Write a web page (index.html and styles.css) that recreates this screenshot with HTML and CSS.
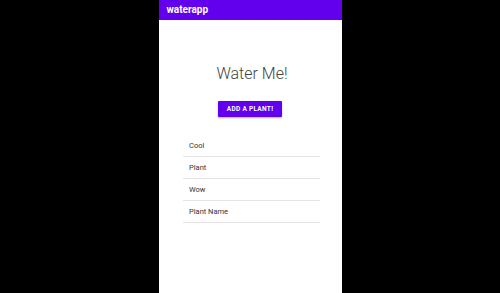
FILE: index.html
```html
<!DOCTYPE html>
<html lang="en">
<head>
    <meta charset="UTF-8">
    <meta name="viewport" content="width=device-width, initial-scale=1.0">
    <title>waterapp</title>
    <link rel="stylesheet" href="styles.css">
</head>
<body>
    <div class="screen">
        <div class="app-bar">waterapp</div>

        <div class="content">
            <h1 class="title">Water Me!</h1>
            <button class="add-btn">Add a plant!</button>

            <ul class="plant-list">
                <li>Cool</li>
                <li>Plant</li>
                <li>Wow</li>
                <li>Plant Name</li>
            </ul>
        </div>
    </div>
</body>
</html>
```

FILE: styles.css
```css
body {
    margin: 0;
    background: #000;
    font-family: Roboto, "Noto Sans", sans-serif;
    display: flex;
    justify-content: center;
    height: 293px;
    overflow: hidden;
}
.screen {
    width: 183px;
    height: 293px;
    background: white;
}
.app-bar {
    height: 20px;
    background: #6200ee;
    color: white;
    font-size: 10px;
    font-weight: 700;
    line-height: 20px;
    padding-left: 8px;
}
.content {
    display: flex;
    flex-direction: column;
    align-items: center;
}
.title {
    margin: 44px 0 0 4px;
    font-size: 16px;
    font-weight: 300;
    color: #444;
    line-height: 20px;
}
.add-btn {
    margin-top: 17px;
    width: 64px;
    height: 16px;
    padding: 0;
    background: #6200ee;
    color: white;
    border: none;
    border-radius: 1px;
    font-family: Roboto, sans-serif;
    font-size: 6.5px;
    font-weight: 700;
    text-transform: uppercase;
    letter-spacing: 0.3px;
    box-shadow: 0 1px 2px rgba(0, 0, 0, 0.3);
}
.plant-list {
    list-style: none;
    margin: 18px 0 0 3px;
    padding: 0;
    width: 137px;
}
.plant-list li {
    height: 21px;
    line-height: 21px;
    font-size: 7.5px;
    color: #333;
    padding-left: 6px;
    border-bottom: 1px solid #e4e4e4;
}
```
